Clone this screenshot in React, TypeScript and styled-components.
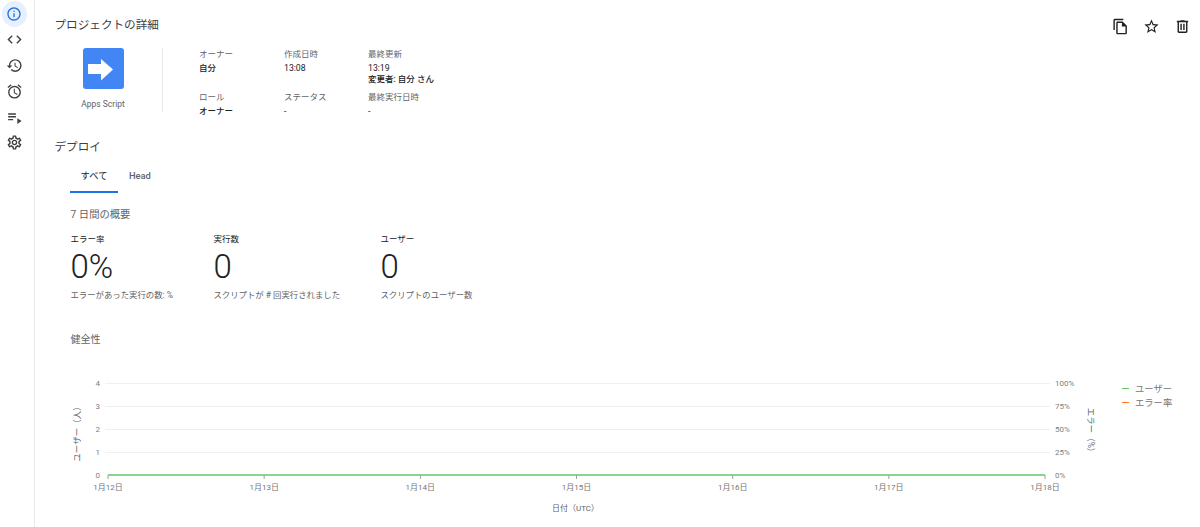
import React from "react";
import styled, { createGlobalStyle } from "styled-components";
import {
  MdInfoOutline,
  MdCode,
  MdHistory,
  MdOutlineAlarm,
  MdPlaylistPlay,
  MdOutlineSettings,
  MdOutlineFileCopy,
  MdStarBorder,
} from "react-icons/md";

const GlobalStyle = createGlobalStyle`
  html, body {
    margin: 0;
    height: 100%;
    overflow: hidden;
    background: #fff;
    font-family: Roboto, "Noto Sans CJK JP", sans-serif;
    color: #3c4043;
  }
  #root { height: 100%; }
`;

const yTicks = ["4", "3", "2", "1", "0"];
const rightTicks = ["100%", "75%", "50%", "25%", "0%"];
const xTicks = ["1月12日", "1月13日", "1月14日", "1月15日", "1月16日", "1月17日", "1月18日"];

const Chart: React.FC = () => {
  const top = 9;
  const rowH = 23;
  const axisY = top + rowH * 4;
  const x0 = 108;
  const xStep = 156.17;
  return (
    <svg width="1165" height="153" viewBox="35 0 1165 153" style={{ display: "block" }}>
      {yTicks.map((t, i) => (
        <g key={t}>
          {i < 4 && <line x1={105} x2={1050} y1={top + i * rowH + 0.5} y2={top + i * rowH + 0.5} stroke="#f0f0f0" />}
          <text x={100} y={top + i * rowH + 3} textAnchor="end" fontSize="8" fill="#808080">{t}</text>
        </g>
      ))}
      {rightTicks.map((t, i) => (
        <text key={t} x={1055} y={top + i * rowH + 3} fontSize="8" fill="#808080">{t}</text>
      ))}
      {xTicks.map((t, i) => (
        <g key={t}>
          <line x1={x0 + i * xStep} x2={x0 + i * xStep} y1={axisY} y2={axisY + 4} stroke="#9e9e9e" />
          <text x={x0 + i * xStep} y={axisY + 15} textAnchor="middle" fontSize="8" fill="#757575">{t}</text>
        </g>
      ))}
      <line x1={108} x2={1045} y1={axisY} y2={axisY} stroke="#66c46a" strokeWidth="1.4" />
      <text x={575.5} y={axisY + 36} textAnchor="middle" fontSize="8" fill="#616161">日付（UTC）</text>
      <text transform={`translate(80 ${top + 49}) rotate(-90)`} textAnchor="middle" fontSize="8.5" fill="#616161">ユーザー（人）</text>
      <text transform={`translate(1088 ${top + 49}) rotate(90)`} textAnchor="middle" fontSize="8.5" fill="#616161">エラー（%）</text>
      <rect x={1122} y={14} width={7} height={1} fill="#66c46a" />
      <text x={1135} y={18} fontSize="9.3" fill="#757575">ユーザー</text>
      <rect x={1122} y={28} width={7} height={1} fill="#ff7a30" />
      <text x={1135} y={32} fontSize="9.3" fill="#757575">エラー率</text>
    </svg>
  );
};

const App: React.FC = () => {
  return (
    <Page>
      <GlobalStyle />
      <Sidebar>
        <NavItem $active><MdInfoOutline size={16} /></NavItem>
        <NavItem><MdCode size={17} /></NavItem>
        <NavItem><MdHistory size={17} /></NavItem>
        <NavItem><MdOutlineAlarm size={17} /></NavItem>
        <NavItem><MdPlaylistPlay size={17} /></NavItem>
        <NavItem><MdOutlineSettings size={17} /></NavItem>
      </Sidebar>
      <Main>
        <Header>
          <SectionTitle>プロジェクトの詳細</SectionTitle>
          <Actions>
            <MdOutlineFileCopy size={17} />
            <MdStarBorder size={17} />
            <svg width="17" height="17" viewBox="0 0 24 24" fill="currentColor">
              <path d="M15 4V3H9v1H4v2h1v13c0 1.100.9 2 2 2h10c1.100 0 2-.9 2-2V6h1V4h-5zm2 15H7V6h10v13zM9 8h2v9H9zm4 0h2v9h-2z" />
            </svg>
          </Actions>
        </Header>
        <Details>
          <LogoBlock>
            <Logo>
              <svg width="41" height="41" viewBox="0 0 41 41">
                <rect width="41" height="41" rx="3" fill="#4285f4" />
                <path d="M5 16h13v-5l12 10.500-12 11V26H5z" fill="#fff" />
              </svg>
            </Logo>
            <LogoLabel>Apps Script</LogoLabel>
          </LogoBlock>
          <Meta>
            <MetaCell>
              <MetaLabel>オーナー</MetaLabel>
              <MetaValue><Strong>自分</Strong></MetaValue>
            </MetaCell>
            <MetaCell>
              <MetaLabel>作成日時</MetaLabel>
              <MetaValue>13:08</MetaValue>
            </MetaCell>
            <MetaCell>
              <MetaLabel>最終更新</MetaLabel>
              <MetaValue>13:19<br /><Strong>変更者: 自分 さん</Strong></MetaValue>
            </MetaCell>
            <MetaCell>
              <MetaLabel>ロール</MetaLabel>
              <MetaValue><Strong>オーナー</Strong></MetaValue>
            </MetaCell>
            <MetaCell>
              <MetaLabel>ステータス</MetaLabel>
              <MetaValue>-</MetaValue>
            </MetaCell>
            <MetaCell>
              <MetaLabel>最終実行日時</MetaLabel>
              <MetaValue>-</MetaValue>
            </MetaCell>
          </Meta>
        </Details>
        <DeployTitle>デプロイ</DeployTitle>
        <Tabs>
          <Tab $active>すべて</Tab>
          <Tab>Head</Tab>
        </Tabs>
        <Overview>
          <SubTitle>7 日間の概要</SubTitle>
          <Stats>
            <Stat $width={143}>
              <StatLabel>エラー率</StatLabel>
              <StatValue>0%</StatValue>
              <StatDesc>エラーがあった実行の数: %</StatDesc>
            </Stat>
            <Stat $width={167}>
              <StatLabel>実行数</StatLabel>
              <StatValue>0</StatValue>
              <StatDesc>スクリプトが # 回実行されました</StatDesc>
            </Stat>
            <Stat $width={120}>
              <StatLabel>ユーザー</StatLabel>
              <StatValue>0</StatValue>
              <StatDesc>スクリプトのユーザー数</StatDesc>
            </Stat>
          </Stats>
          <HealthTitle>健全性</HealthTitle>
        </Overview>
        <ChartArea>
          <Chart />
        </ChartArea>
      </Main>
    </Page>
  );
};

export default App;

const Page = styled.div`
  display: flex;
  height: 527px;
  overflow: hidden;
`;
const Sidebar = styled.nav`
  width: 35px;
  flex-shrink: 0;
  border-right: 1px solid #e8eaed;
  display: flex;
  flex-direction: column;
  align-items: flex-start;
  padding: 1px 0 0 1.6px;
  box-sizing: border-box;
`;
const NavItem = styled.div<{ $active?: boolean }>`
  width: 25.8px;
  height: 25.8px;
  border-radius: 50%;
  display: flex;
  align-items: center;
  justify-content: center;
  flex-shrink: 0;
  color: ${({ $active }) => ($active ? "#1a73e8" : "#3c4043")};
  background: ${({ $active }) => ($active ? "#e8f0fe" : "transparent")};
`;
const Main = styled.main`
  flex: 1;
  min-width: 0;
`;
const Header = styled.div`
  display: flex;
  justify-content: space-between;
  padding: 16px 9px 0 19.500px;
  height: 31px;
`;
const SectionTitle = styled.h2`
  margin: 0;
  font-size: 11.6px;
  line-height: 18px;
  font-weight: 400;
  color: #3c4043;
`;
const Actions = styled.div`
  display: flex;
  gap: 14px;
  color: #202124;
  margin-top: 2px;
`;
const Details = styled.section`
  display: flex;
  height: 64px;
  margin-top: 1px;
`;
const LogoBlock = styled.div`
  width: 127px;
  border-right: 1px solid #e8eaed;
  display: flex;
  flex-direction: column;
  align-items: center;
`;
const Logo = styled.div`
  height: 41px;
  margin-left: 9px;
  svg { display: block; }
`;
const LogoLabel = styled.div`
  margin-top: 9px;
  margin-left: 9px;
  font-size: 8.5px;
  line-height: 12px;
  color: #5f6368;
`;
const Meta = styled.div`
  display: grid;
  grid-template-columns: 85px 84px 120px;
  grid-template-rows: 42.5px 21.5px;
  padding-left: 36px;
`;
const MetaCell = styled.div``;
const MetaLabel = styled.div`
  font-size: 8.5px;
  line-height: 12px;
  color: #5f6368;
`;
const MetaValue = styled.div`
  margin-top: 3px;
  font-size: 8.7px;
  line-height: 11px;
  color: #202124;
`;
const Strong = styled.span`
  font-weight: 500;
  font-size: 8.5px;
`;
const DeployTitle = styled.h2`
  margin: 26px 0 0 19.5px;
  font-size: 11.6px;
  line-height: 18px;
  font-weight: 400;
  color: #3c4043;
`;
const Tabs = styled.div`
  display: flex;
  margin: 8px 0 0 35px;
`;
const Tab = styled.div<{ $active?: boolean }>`
  padding: ${({ $active }) => ($active ? "0" : "0 11px")};
  width: ${({ $active }) => ($active ? "48px" : "auto")};
  box-sizing: border-box;
  height: 29px;
  line-height: 24px;
  font-size: 9.3px;
  white-space: nowrap;
  text-align: center;
  font-weight: ${({ $active }) => ($active ? 400 : 500)};
  color: ${({ $active }) => ($active ? "#202124" : "#5f6368")};
  border-bottom: 2px solid ${({ $active }) => ($active ? "#1a73e8" : "transparent")};
`;
const Overview = styled.section`
  padding-left: 35.5px;
`;
const SubTitle = styled.h3`
  margin: 14px 0 0;
  font-size: 10.3px;
  line-height: 16px;
  font-weight: 400;
  color: #5f6368;
`;
const Stats = styled.div`
  display: flex;
  margin-top: 10px;
`;
const Stat = styled.div<{ $width: number }>`
  width: ${({ $width }) => $width}px;
  flex-shrink: 0;
`;
const StatLabel = styled.div`
  font-size: 8.5px;
  line-height: 12px;
  color: #202124;
`;
const StatValue = styled.div`
  margin-top: 4px;
  font-size: 33px;
  line-height: 36px;
  font-weight: 300;
  color: #202124;
`;
const StatDesc = styled.div`
  margin-top: 4px;
  font-size: 8.4px;
  line-height: 12px;
  color: #5f6368;
`;
const HealthTitle = styled.h3`
  margin: 31px 0 0;
  font-size: 10px;
  line-height: 16px;
  font-weight: 400;
  color: #5f6368;
`;
const ChartArea = styled.section`
  margin-top: 26px;
`;
